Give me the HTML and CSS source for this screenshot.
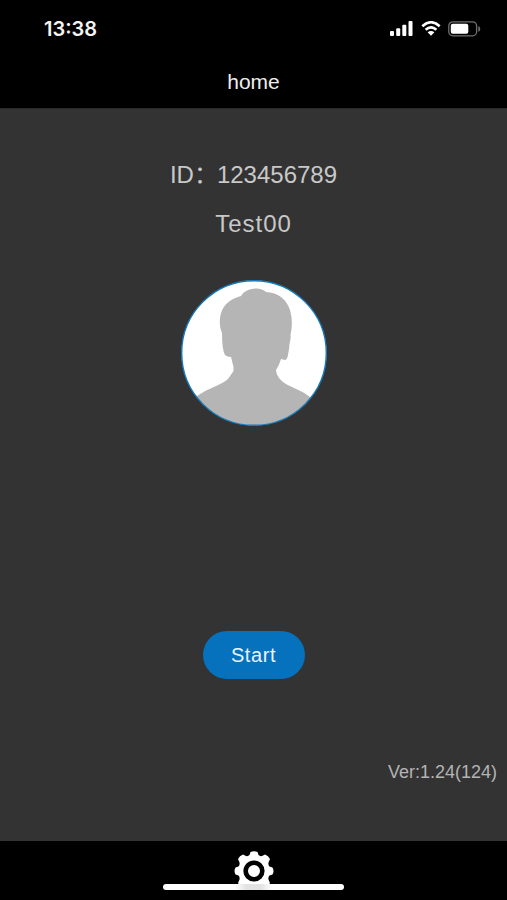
FILE: index.html
```
<!DOCTYPE html>
<html>
<head>
<meta charset="utf-8">
<meta name="viewport" content="width=device-width, initial-scale=1.0">
<title>home</title>
<link rel="stylesheet" href="styles.css">
</head>
<body>
<div class="statusbar">
<span class="time">13:38</span>
<svg class="signal" viewBox="0 0 23 15">
<rect x="0" y="10" width="4" height="5" rx="1"/>
<rect x="6.2" y="7.3" width="4" height="7.7" rx="1"/>
<rect x="12.3" y="3.8" width="4" height="11.2" rx="1"/>
<rect x="18.5" y="0" width="4" height="15" rx="1"/>
</svg>
<svg class="wifi" viewBox="0 0 20 15">
<path d="M1.3 5.2Q10-2.7 18.7 5.2M4.6 8.7Q10 4 15.4 8.7"/>
<path class="dot" d="M6.6 11.2Q10 8.8 13.4 11.2L10 14.7Z"/>
</svg>
<svg class="battery" viewBox="0 0 33 16">
<rect class="case" x="0.8" y="0.8" width="27.8" height="14" rx="4"/>
<rect class="level" x="2.8" y="2.8" width="17.5" height="10" rx="2"/>
<path class="cap" d="M30.3 5v6q2-1 2-3t-2-3z"/>
</svg>
</div>
<div class="header">home</div>

<div class="content">
<div class="userid">ID<span class="colon">：</span>123456789</div>
<div class="username">Test00</div>
<svg class="avatar" viewBox="181 280 146 146">
<clipPath id="round"><circle cx="254" cy="353" r="72.5"/></clipPath>
<circle class="back" cx="254" cy="353" r="72.5"/>
<path class="person" clip-path="url(#round)" d="M181 430V405L197 396Q206 390 216 386Q225 382 228 379L233.500 371V367L231 357Q227 357 225 355Q222 350 222 333Q219 327 220 318Q222 301 241 296Q245 289 255 288.500Q262 288 266 292Q284 293 290 310Q293.500 322 290.500 335Q291 338 289.500 344Q289 350 288.500 352Q287.500 360 285 360L281 359Q279 366 276 370Q276 374 279 378Q284 384 292 387Q302 391 310 397L330 408V430Z"/>
<circle class="ring" cx="254" cy="353" r="72.3"/>
</svg>
<button class="start">Start</button>
<div class="version">Ver:1.24(124)</div>
</div>

<div class="footer">
<svg class="gear" viewBox="-20 -20 40 40">
<path d="M-4.500-16L-3.500-19Q0-20.500 3.500-19L4.500-16Q6-14.500 8-15L11-16.500Q14.500-15.500 16-12L14.500-8.500Q14-6 15.500-4.500L18.500-3.500Q20.500 0 18.500 3.500L15.500 4.500Q14 6 14.500 8.500L16 12Q14.500 15.500 11 16.500H-11Q-14.500 15.500-16 12L-14.500 8.500Q-14 6-15.500 4.500L-18.500 3.500Q-20.500 0-18.500-3.500L-15.500-4.500Q-14-6-14.500-8.500L-16-12Q-14.500-15.500-11-16.500L-8-15Q-6-14.500-4.500-16Z"/>
<circle r="8.300"/>
</svg>
<div class="homebar"></div>
</div>
</body>
</html>
```
FILE: styles.css
```
* {
    box-sizing: border-box;
}

body{
margin:0;
height:100vh;
display:flex;
flex-direction:column;
background-color:#333333;
font-family:"Liberation Sans","Noto Sans CJK SC",sans-serif;
}

.statusbar{
height:56px;
padding:1px 26px 0 44px;
display:flex;
align-items:center;
background-color:black;
}

.time{
flex:1;
padding-top:1px;
color:#f4f4f4;
font-family:Inter,sans-serif;
font-size:20px;
font-weight:600;
}

.signal{
width:23px;
height:15px;
fill:white;
}

.wifi{
width:20px;
height:15px;
margin-left:8px;
fill:none;
stroke:white;
stroke-width:2.6;
}

.dot{
fill:white;
stroke:none;
}

.battery{
width:33px;
height:16px;
margin-left:7px;
}

.case{
fill:none;
stroke:#707070;
stroke-width:1.3;
}

.level{
fill:white;
}

.cap{
fill:#707070;
}

.header{
height:52px;
line-height:51px;
background-color:black;
color:#eeeeee;
font-size:21px;
text-align:center;
}

.content{
flex:1;
display:flex;
flex-direction:column;
align-items:center;
border-top:1px solid #292929;
color:#c8c8c8;
font-size:24px;
line-height:28px;
}

.userid{
margin-top:52px;
display:flex;
}

.colon{
width:23px;
}

.username{
margin-top:21px;
letter-spacing:1px;
}

.avatar{
width:146px;
height:146px;
margin-top:42px;
}

.back{
fill:white;
}

.person{
fill:#b5b5b5;
}

.ring{
fill:none;
stroke:#1479b8;
stroke-width:1.4;
}

.start{
width:102px;
height:48px;
margin-top:205px;
padding:0;
border:none;
border-radius:24px;
background-color:#0671bc;
color:#e8f4ff;
font-family:inherit;
font-size:20px;
letter-spacing:0.6px;
}

.version{
align-self:flex-end;
margin:79px 10px 0 0;
color:#b4b4b4;
font-size:18px;
}

.footer{
height:59px;
padding-top:10px;
display:flex;
flex-direction:column;
align-items:center;
background-color:black;
}

.gear{
width:40px;
height:40px;
fill:white;
}

.gear circle{
stroke:black;
stroke-width:4.6;
}

.homebar{
width:181px;
height:6px;
margin-top:-7px;
border-radius:3px;
background:linear-gradient(to right,white 40%,#e2e2e2 46%,#e2e2e2 54%,white 60%);
z-index:1;
}
```
